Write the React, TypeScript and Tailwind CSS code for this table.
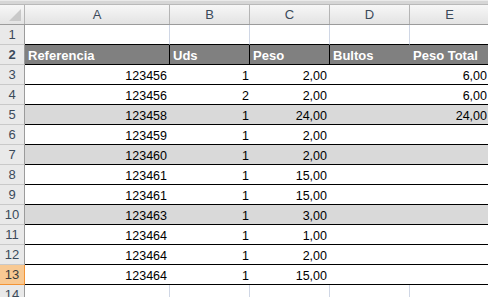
import React from 'react'

type Row = { n: number; a?: string; b?: string; c?: string; e?: string; shade?: boolean }

const rows: Row[] = [
  { n: 3, a: '123456', b: '1', c: '2,00', e: '6,00' },
  { n: 4, a: '123456', b: '2', c: '2,00', e: '6,00' },
  { n: 5, a: '123458', b: '1', c: '24,00', e: '24,00', shade: true },
  { n: 6, a: '123459', b: '1', c: '2,00' },
  { n: 7, a: '123460', b: '1', c: '2,00', shade: true },
  { n: 8, a: '123461', b: '1', c: '15,00' },
  { n: 9, a: '123461', b: '1', c: '15,00' },
  { n: 10, a: '123463', b: '1', c: '3,00', shade: true },
  { n: 11, a: '123464', b: '1', c: '1,00' },
  { n: 12, a: '123464', b: '1', c: '2,00' },
  { n: 13, a: '123464', b: '1', c: '15,00' },
]

const font = { fontFamily: '"Liberation Sans", Arial, sans-serif' }

function RowHead({ n, active }: { n: number | string; active?: boolean }) {
  return (
    <div
      className={
        'w-[25px] shrink-0 h-full flex items-center justify-center text-[13px] border-r border-b ' +
        (active
          ? 'bg-[#f8c993] text-[#3b3b3b] border-r-[#f29436] border-b-[#f29436]'
          : 'bg-[#e9e9e9] text-[#3b4a5a] border-r-[#9b9b9b] border-b-[#c9c9c9]')
      }
    >
      {n}
    </div>
  )
}

export default function App() {
  return (
    <div className="w-[488px] h-[297px] overflow-hidden bg-white text-black" style={font}>
      {/* top band */}
      <div className="h-[5px] bg-[#d6d6d6] border-t border-[#eaeaea] border-b border-b-[#b9b9b9]" />

      {/* column letters */}
      <div className="flex h-[20px] w-[600px] border-b border-[#9b9b9b] bg-gradient-to-b from-[#f7f7f7] to-[#e3e3e3] text-[13px] text-[#3b4a5a]">
        <div className="relative w-[25px] shrink-0 border-r border-[#b5b5b5]">
          <div className="absolute right-[3px] bottom-[3px] w-0 h-0 border-l-[12px] border-l-transparent border-b-[12px] border-b-[#c9c9c9]" />
        </div>
        <div className="w-[145px] shrink-0 border-r border-[#b5b5b5] flex items-center justify-center">A</div>
        {['B', 'C', 'D', 'E'].map((l) => (
          <div key={l} className="w-[80px] shrink-0 border-r border-[#b5b5b5] flex items-center justify-center">
            {l}
          </div>
        ))}
      </div>

      {/* row 1 */}
      <div className="flex h-[20px] w-[600px]">
        <RowHead n={1} />
        <div className="w-[145px] shrink-0 border-r border-r-[#d0d7e5] border-b border-b-black" />
        <div className="w-[80px] shrink-0 border-r border-r-[#d0d7e5] border-b border-b-black" />
        <div className="w-[80px] shrink-0 border-r border-r-[#d0d7e5] border-b border-b-black" />
        <div className="w-[80px] shrink-0 border-r border-r-[#d0d7e5] border-b border-b-black" />
        <div className="w-[80px] shrink-0 border-r border-r-[#d0d7e5] border-b border-b-black" />
      </div>

      {/* row 2 header */}
      <div className="flex h-[20px] w-[600px] text-[13px] leading-[16px] font-bold text-white">
        <RowHead n={2} />
        <div className="w-[145px] shrink-0 bg-[#808080] border-r border-b border-black flex items-end pl-[3px]">Referencia</div>
        <div className="w-[80px] shrink-0 bg-[#808080] border-r border-b border-black flex items-end pl-[3px]">Uds</div>
        <div className="w-[80px] shrink-0 bg-[#808080] border-r border-b border-black flex items-end pl-[3px]">Peso</div>
        <div className="w-[80px] shrink-0 bg-[#808080] border-b border-black flex items-end pl-[3px]">Bultos</div>
        <div className="w-[80px] shrink-0 bg-[#808080] border-b border-black flex items-end pl-[3px]">Peso Total</div>
      </div>

      {/* data rows */}
      {rows.map((r) => (
        <div key={r.n} className="flex h-[20px] w-[600px] text-[12.5px] leading-[16px]">
          <RowHead n={r.n} active={r.n === 13} />
          <div className={'flex w-[465px] shrink-0 border-b border-black ' + (r.shade ? 'bg-[#d9d9d9]' : 'bg-white')}>
            <div className="w-[145px] shrink-0 flex items-end justify-end pr-[3px]">{r.a}</div>
            <div className="w-[80px] shrink-0 flex items-end justify-end pr-[1px]">{r.b}</div>
            <div className="w-[80px] shrink-0 flex items-end justify-end pr-[3px]">{r.c}</div>
            <div className="w-[80px] shrink-0" />
            <div className="w-[80px] shrink-0 flex items-end justify-end pr-[3px]">{r.e}</div>
          </div>
        </div>
      ))}

      {/* row 14 */}
      <div className="flex h-[20px] w-[600px]">
        <RowHead n={14} />
        <div className="w-[145px] shrink-0 border-r border-[#d0d7e5]" />
        <div className="w-[80px] shrink-0 border-r border-[#d0d7e5]" />
        <div className="w-[80px] shrink-0 border-r border-[#d0d7e5]" />
        <div className="w-[80px] shrink-0 border-r border-[#d0d7e5]" />
        <div className="w-[80px] shrink-0 border-r border-[#d0d7e5]" />
      </div>
    </div>
  )
}
